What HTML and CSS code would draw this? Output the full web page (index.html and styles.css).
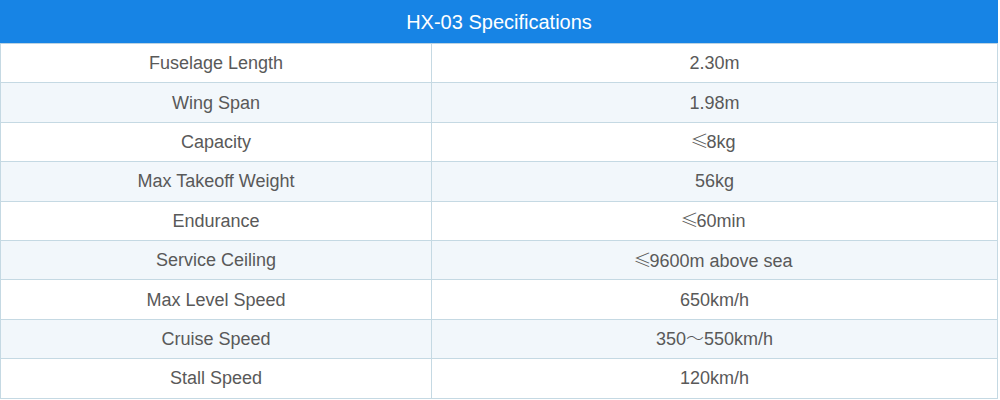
FILE: index.html
```html
<!DOCTYPE html>
<html>
<head>
<meta charset="utf-8">
<link rel="stylesheet" href="styles.css">
</head>
<body>
<table class="spec">
  <colgroup>
    <col class="c1">
    <col class="c2">
  </colgroup>
  <thead>
    <tr><th colspan="2" class="title">HX-03 Specifications</th></tr>
  </thead>
  <tbody>
    <tr><td>Fuselage Length</td><td>2.30m</td></tr>
    <tr class="alt"><td>Wing Span</td><td>1.98m</td></tr>
    <tr><td>Capacity</td><td><span class="le">≤</span>8kg</td></tr>
    <tr class="alt"><td>Max Takeoff Weight</td><td>56kg</td></tr>
    <tr><td>Endurance</td><td><span class="le">≤</span>60min</td></tr>
    <tr class="alt"><td>Service Ceiling</td><td><span class="le">≤</span>9600m above sea</td></tr>
    <tr><td>Max Level Speed</td><td>650km/h</td></tr>
    <tr class="alt"><td>Cruise Speed</td><td>350<span class="tilde">～</span>550km/h</td></tr>
    <tr><td>Stall Speed</td><td>120km/h</td></tr>
  </tbody>
</table>
</body>
</html>
```
FILE: styles.css
```css
html, body {
  margin: 0;
  padding: 0;
  background: #ffffff;
}
.spec {
  width: 998px;
  border-collapse: collapse;
  table-layout: fixed;
  font-family: "Liberation Sans", Arial, sans-serif;
}
.c1 {
  width: 431px;
}
.title {
  background: #1784e5;
  color: #ffffff;
  font-weight: normal;
  font-size: 20px;
  height: 42px;
  padding: 0;
  text-align: center;
  border: 1px solid #1784e5;
  border-bottom: 1px solid #bcd3e2;
}
.spec td {
  height: 38.4px;
  padding: 0;
  border: 1px solid #c5d9e3;
  text-align: center;
  font-size: 18px;
  line-height: 20px;
  color: #595959;
}
.spec tr.alt td {
  background: #f2f7fb;
}
.le,
.tilde {
  font-family: "Noto Sans CJK SC", sans-serif;
  font-weight: 300;
  line-height: 1;
}
.le {
  letter-spacing: -2px;
  margin-left: -3px;
}
```
